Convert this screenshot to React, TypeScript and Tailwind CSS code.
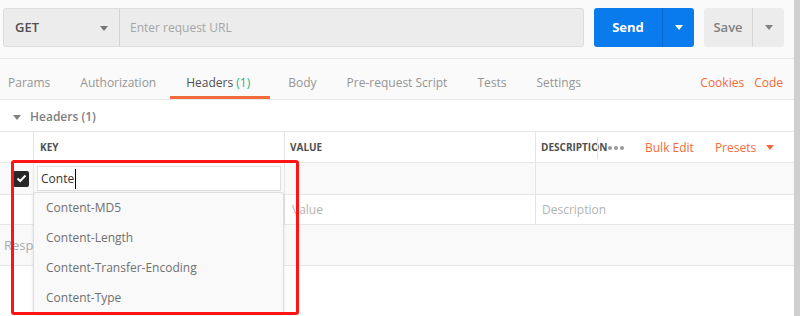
function Caret({ className }: { className: string }) {
  return (
    <svg className={className} width="8" height="5" viewBox="0 0 8 5">
      <polygon points="0,0 8,0 4,5" fill="currentColor" />
    </svg>
  );
}

function Divider() {
  return <span className="h-[22px] w-px bg-[#e3e3e3]" />;
}

const tabs = ["Params", "Authorization", "Headers", "Body", "Pre-request Script", "Tests", "Settings"];
const suggestions = ["Content-MD5", "Content-Length", "Content-Transfer-Encoding", "Content-Type"];

export default function App() {
  return (
    <div className="flex h-[316px] w-[800px] overflow-hidden bg-white font-['Open_Sans',sans-serif] text-[12px]">
      <div className="relative flex w-[794px] flex-col">
        {/* url bar */}
        <div className="flex h-[59px] shrink-0 items-start gap-[10px] border-b border-[#e8e8e8] bg-[#fafafa] pl-[3px] pr-[10px] pt-[8px]">
          <div className="flex h-[39px] flex-1 rounded-[3px] border border-[#dcdcdc] bg-[#ececec]">
            <div className="flex w-[116px] items-center justify-between border-r border-[#d4d4d4] pl-[11px] pr-[11px] pt-px">
              <span className="text-[13px] font-semibold text-[#505050]">GET</span>
              <Caret className="text-[#777]" />
            </div>
            <div className="flex flex-1 items-center pl-[10px] pt-px text-[#a6a6a6]">Enter request URL</div>
          </div>
          <div className="flex h-[39px] w-[100px] rounded-[3px] bg-[#097bed] text-white">
            <div className="flex w-[69px] items-center justify-center border-r border-[#0a6bd0] pt-px text-[13px] font-bold">Send</div>
            <div className="flex flex-1 items-center justify-center">
              <Caret className="text-white" />
            </div>
          </div>
          <div className="flex h-[39px] w-[80px] rounded-[3px] bg-[#ececec] text-[#808080]">
            <div className="flex w-[49px] items-center justify-center border-r border-[#d8d8d8] pt-px text-[13px] font-semibold">Save</div>
            <div className="flex flex-1 items-center justify-center">
              <Caret className="text-[#808080]" />
            </div>
          </div>
        </div>

        {/* tabs */}
        <div className="flex h-[41px] shrink-0 items-stretch border-b border-[#e8e8e8] bg-[#fafafa] pl-[8px] pr-[11px]">
          <div className="flex gap-[30px]">
            {tabs.map((t) => (
              <div key={t} className={`relative flex items-center pt-[8px] ${t === "Headers" ? "mr-[8px] text-[#505050]" : "text-[#959595]"}`}>
                {t === "Headers" ? (
                  <>
                    <span>
                      Headers <span className="text-[#26b47f]">(1)</span>
                    </span>
                    <span className="absolute bottom-0 left-[-16px] right-[-20px] h-[3px] bg-[#f26b3a]" />
                  </>
                ) : (
                  t
                )}
              </div>
            ))}
          </div>
          <div className="ml-auto flex items-center gap-[10px] pt-[8px] text-[#f26b3a]">
            <span>Cookies</span>
            <span>Code</span>
          </div>
        </div>

        {/* headers section title */}
        <div className="flex h-[32px] shrink-0 items-center gap-[9px] border-b border-[#e6e6e6] pl-[13px] pt-[3px]">
          <Caret className="text-[#808080]" />
          <span className="font-semibold text-[#808080]">Headers (1)</span>
        </div>

        {/* table header */}
        <div className="flex h-[31px] shrink-0 border-b border-[#e6e6e6] text-[10px] font-bold text-[#505050]">
          <div className="w-[34px] border-r border-[#e6e6e6]" />
          <div className="flex w-[251px] items-center border-r border-[#e6e6e6] pl-[6px] pt-px">KEY</div>
          <div className="flex w-[251px] items-center border-r border-[#e6e6e6] pl-[5px] pt-px">VALUE</div>
          <div className="flex flex-1 items-center pl-[5px] pt-px">
            <span className="w-[56px] whitespace-nowrap">DESCRIPTION</span>
            <Divider />
            <span className="ml-[10px] flex gap-[2px]">
              <span className="h-[4px] w-[4px] rounded-full bg-[#999]" />
              <span className="h-[4px] w-[4px] rounded-full bg-[#999]" />
              <span className="h-[4px] w-[4px] rounded-full bg-[#999]" />
            </span>
            <span className="ml-[10px]">
              <Divider />
            </span>
            <span className="ml-[11px] text-[12px] font-normal text-[#f26b3a]">Bulk Edit</span>
            <span className="ml-[10px]">
              <Divider />
            </span>
            <span className="ml-[11px] text-[12px] font-normal text-[#f26b3a]">Presets</span>
            <Caret className="ml-[10px] text-[#f26b3a]" />
          </div>
        </div>

        {/* row 1 */}
        <div className="flex h-[32px] shrink-0 border-b border-[#e6e6e6] bg-[#f9f9f9]">
          <div className="flex w-[34px] items-center border-r border-[#e6e6e6] pl-[13px]">
            <span className="flex h-[16px] w-[16px] items-center justify-center rounded-[2px] bg-[#282828]">
              <svg width="11" height="9" viewBox="0 0 11 9">
                <path d="M1.5 4.5 L4.2 7 L9.5 1.5" stroke="white" strokeWidth="2" fill="none" />
              </svg>
            </span>
          </div>
          <div className="flex w-[251px] items-center border-r border-[#e6e6e6] pl-[3px]">
            <div className="flex h-[25px] w-[244px] items-center border border-[#e0e0e0] bg-white pl-[3px] text-[#333]">
              <span>Conte</span>
              <span className="ml-px h-[20px] w-px bg-black" />
            </div>
          </div>
          <div className="w-[251px] border-r border-[#e6e6e6]" />
          <div className="flex-1" />
        </div>

        {/* row 2 */}
        <div className="flex h-[30px] shrink-0 border-b border-[#e6e6e6] text-[#b3b3b3]">
          <div className="w-[34px] border-r border-[#e6e6e6]" />
          <div className="w-[251px] border-r border-[#e6e6e6]" />
          <div className="flex w-[251px] items-center border-r border-[#e6e6e6] pl-[7px] pt-px">Value</div>
          <div className="flex flex-1 items-center pl-[6px] pt-px">Description</div>
        </div>

        {/* response bar */}
        <div className="flex h-[41px] shrink-0 items-center border-b border-[#e6e6e6] bg-[#f9f9f9] pl-[4px] pt-px text-[13px] text-[#ababab]">
          Response
        </div>
        <div className="flex-1" />

        {/* autocomplete dropdown */}
        <div className="absolute left-[33px] top-[192px] flex w-[251px] flex-col rounded-[3px] border border-[#dddddd] bg-[#f9f9f9] text-[#707070] shadow-[0_1px_3px_rgba(0,0,0,0.12)]">
          {suggestions.map((s) => (
            <div key={s} className="flex h-[30px] shrink-0 items-center pl-[12px]">
              {s}
            </div>
          ))}
        </div>

        {/* highlight */}
        <div className="pointer-events-none absolute left-[11px] top-[160px] h-[155px] w-[288px] rounded-[3px] border-[3px] border-[#ff1414]" />
      </div>
      <div className="w-[6px] bg-[#cfcfcf]" />
    </div>
  );
}
